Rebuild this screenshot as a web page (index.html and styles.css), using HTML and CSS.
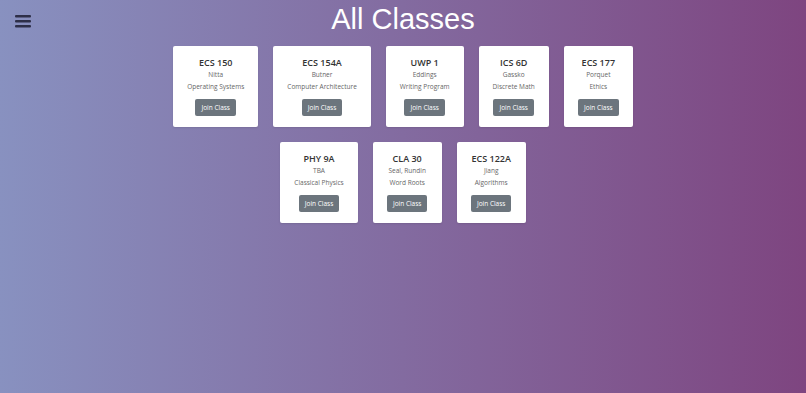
FILE: index.html
```html
<!DOCTYPE html>
<html lang="en">
<head>
    <meta charset="UTF-8">
    <meta name="viewport" content="width=device-width, initial-scale=1.0">
    <title>All Classes</title>
    <link rel="stylesheet" href="styles.css">
</head>
<body>
    <button class="menu-button" aria-label="Menu">
        <svg width="16" height="14" viewBox="0 0 16 14">
            <rect x="0" y="1" width="16" height="2.4" rx="1" />
            <rect x="0" y="6" width="16" height="2.4" rx="1" />
            <rect x="0" y="11" width="16" height="2.4" rx="1" />
        </svg>
    </button>

    <h1>All Classes</h1>

    <div class="class-list">
        <div class="card">
            <h2>ECS 150</h2>
            <p>Nitta</p>
            <p>Operating Systems</p>
            <a href="#" class="button">Join Class</a>
        </div>
        <div class="card">
            <h2>ECS 154A</h2>
            <p>Butner</p>
            <p>Computer Architecture</p>
            <a href="#" class="button">Join Class</a>
        </div>
        <div class="card">
            <h2>UWP 1</h2>
            <p>Eddings</p>
            <p>Writing Program</p>
            <a href="#" class="button">Join Class</a>
        </div>
        <div class="card">
            <h2>ICS 6D</h2>
            <p>Gassko</p>
            <p>Discrete Math</p>
            <a href="#" class="button">Join Class</a>
        </div>
        <div class="card">
            <h2>ECS 177</h2>
            <p>Porquet</p>
            <p>Ethics</p>
            <a href="#" class="button">Join Class</a>
        </div>
        <div class="card">
            <h2>PHY 9A</h2>
            <p>TBA</p>
            <p>Classical Physics</p>
            <a href="#" class="button">Join Class</a>
        </div>
        <div class="card">
            <h2>CLA 30</h2>
            <p>Seal, Rundin</p>
            <p>Word Roots</p>
            <a href="#" class="button">Join Class</a>
        </div>
        <div class="card">
            <h2>ECS 122A</h2>
            <p>Jiang</p>
            <p>Algorithms</p>
            <a href="#" class="button">Join Class</a>
        </div>
    </div>
</body>
</html>
```

FILE: styles.css
```css
html, body {
    height: 100%;
}
body {
    margin: 0;
    font-family: "Open Sans", "Noto Sans", sans-serif;
    color: #333;
    background: linear-gradient(to right, #8891c0, #7e4580);
}
.menu-button {
    position: absolute;
    top: 14px;
    left: 15px;
    padding: 0;
    border: none;
    background: none;
    cursor: pointer;
}
.menu-button svg {
    display: block;
    fill: #2e2f48;
}
h1 {
    margin: 0;
    padding-top: 2px;
    font-family: "Liberation Sans", Arial, sans-serif;
    font-weight: normal;
    font-size: 29px;
    line-height: 35px;
    text-align: center;
    color: #fff;
}
.class-list {
    display: flex;
    flex-wrap: wrap;
    justify-content: center;
    gap: 15px;
    max-width: 480px;
    margin: 9px auto 0;
}
.card {
    box-sizing: border-box;
    min-width: 69px;
    background: #fff;
    border-radius: 2px;
    padding: 11px 14px;
    text-align: center;
    box-shadow: 0 1px 2px rgba(0, 0, 0, 0.1);
}
.card h2 {
    margin: 0;
    font-size: 9px;
    line-height: 12px;
    font-weight: 600;
    color: #333;
}
.card p {
    margin: 0;
    font-size: 6.5px;
    line-height: 12px;
    color: #666;
}
.button {
    display: inline-block;
    margin-top: 3px;
    padding: 4px 6px;
    font-size: 6.5px;
    line-height: 9px;
    background-color: #6c757d;
    color: #fff;
    text-decoration: none;
    border-radius: 2px;
}
```
